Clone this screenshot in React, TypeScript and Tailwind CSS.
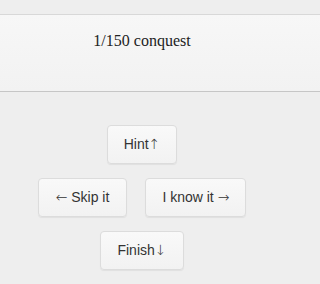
const btn =
  "inline-flex h-[39px] items-center justify-center whitespace-nowrap rounded-[4px] border border-[#dcdcdc] bg-gradient-to-b from-[#f9f9f9] to-[#f2f2f2] font-['Liberation_Sans',Arial,sans-serif] text-[14px] text-[#333] shadow-[0_1px_1px_rgba(0,0,0,0.06)]";

const arrow = "font-['DejaVu_Sans',sans-serif] font-extralight";

export default function App() {
  return (
    <div className="min-h-screen bg-[#eeeeee] pt-[14px]">
      <div className="h-[78px] border-y border-t-[#d8d8d8] border-b-[#c6c6c6] bg-gradient-to-b from-[#f7f7f7] to-[#f2f2f2] pt-[14px]">
        <h1 className="w-[284px] text-center font-['Liberation_Serif','Times_New_Roman',serif] text-[16px] leading-6 text-[#222]">
          1/150 conquest
        </h1>
      </div>

      <div className="mt-[33px] flex w-[284px] flex-col items-center gap-[14px]">
        <button className={`${btn} px-[16px]`}>
          <span>
            Hint<span className={arrow}>↑</span>
          </span>
        </button>
        <div className="flex gap-[18px]">
          <button className={`${btn} px-[17px]`}>
            <span>
              <span className={arrow}>←</span> Skip it
            </span>
          </button>
          <button className={`${btn} px-[16px]`}>
            <span>
              I know it <span className={arrow}>→</span>
            </span>
          </button>
        </div>
        <button className={`${btn} px-[16px]`}>
          <span>
            Finish<span className={arrow}>↓</span>
          </span>
        </button>
      </div>
    </div>
  );
}
